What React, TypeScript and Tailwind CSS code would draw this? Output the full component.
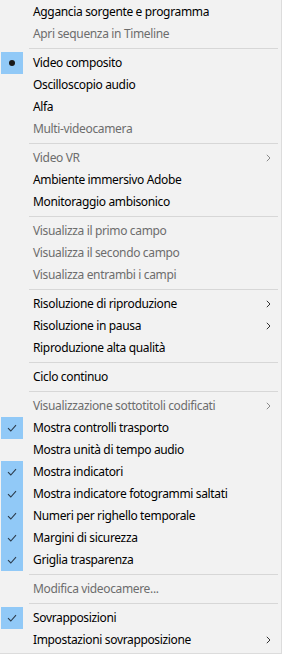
import React from "react";

type Item =
  | { sep: true }
  | {
      sep?: false;
      label: string;
      disabled?: boolean;
      mark?: "dot" | "check";
      sub?: boolean;
    };

const items: Item[] = [
  { label: "Aggancia sorgente e programma" },
  { label: "Apri sequenza in Timeline", disabled: true },
  { sep: true },
  { label: "Video composito", mark: "dot" },
  { label: "Oscilloscopio audio" },
  { label: "Alfa" },
  { label: "Multi-videocamera", disabled: true },
  { sep: true },
  { label: "Video VR", disabled: true, sub: true },
  { label: "Ambiente immersivo Adobe" },
  { label: "Monitoraggio ambisonico" },
  { sep: true },
  { label: "Visualizza il primo campo", disabled: true },
  { label: "Visualizza il secondo campo", disabled: true },
  { label: "Visualizza entrambi i campi", disabled: true },
  { sep: true },
  { label: "Risoluzione di riproduzione", sub: true },
  { label: "Risoluzione in pausa", sub: true },
  { label: "Riproduzione alta qualità" },
  { sep: true },
  { label: "Ciclo continuo" },
  { sep: true },
  { label: "Visualizzazione sottotitoli codificati", disabled: true, sub: true },
  { label: "Mostra controlli trasporto", mark: "check" },
  { label: "Mostra unità di tempo audio" },
  { label: "Mostra indicatori", mark: "check" },
  { label: "Mostra indicatore fotogrammi saltati", mark: "check" },
  { label: "Numeri per righello temporale", mark: "check" },
  { label: "Margini di sicurezza", mark: "check" },
  { label: "Griglia trasparenza", mark: "check" },
  { sep: true },
  { label: "Modifica videocamere...", disabled: true },
  { sep: true },
  { label: "Sovrapposizioni", mark: "check" },
  { label: "Impostazioni sovrapposizione", sub: true },
];

function Mark({ kind }: { kind?: "dot" | "check" }) {
  if (!kind) return <div className="w-[22px] h-[22px] shrink-0" />;
  return (
    <div className="w-[22px] h-[22px] shrink-0 bg-[#91c9f7] flex items-center justify-center">
      {kind === "dot" ? (
        <div className="w-[6px] h-[6px] rounded-full bg-[#1a1a1a]" />
      ) : (
        <svg width="10" height="8" viewBox="0 0 10 8">
          <path d="M1 4.2 L3.8 7 L9 1.2" fill="none" stroke="#2b3a4a" strokeWidth="1.1" />
        </svg>
      )}
    </div>
  );
}

export default function App() {
  return (
    <div
      className="w-[282px] h-[654px] bg-[#f2f2f2] border-r border-b border-[#dcdcdc] pt-[1px] pl-[1px] text-[12px] tracking-[-0.35px] overflow-hidden"
      style={{ fontFamily: '"Noto Sans", "Open Sans", sans-serif' }}
    >
      {items.map((it, i) =>
        it.sep ? (
          <div key={i} className="h-[7px] flex items-center pl-[28px] pr-[3px]">
            <div className="h-px w-full bg-[#d7d7d7]" />
          </div>
        ) : (
          <div key={i} className="h-[22px] flex items-center">
            <Mark kind={it.mark} />
            <span
              className={
                "ml-[10px] flex-1 whitespace-nowrap leading-none " +
                (it.disabled ? "text-[#6d6d6d]" : "text-black")
              }
            >
              {it.label}
            </span>
            {it.sub && (
              <svg width="5" height="8" viewBox="0 0 5 8" className="mr-[10px]">
                <path
                  d="M0.8 0.8 L4 4 L0.8 7.2"
                  fill="none"
                  stroke={it.disabled ? "#8a8a8a" : "#333"}
                  strokeWidth="1"
                />
              </svg>
            )}
          </div>
        )
      )}
    </div>
  );
}
